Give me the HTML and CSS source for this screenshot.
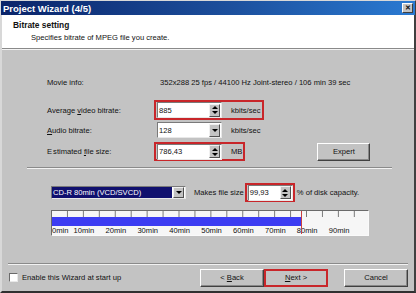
FILE: index.html
```html
<!DOCTYPE html>
<html lang="en">
<head>
    <meta charset="UTF-8">
    <title>Project Wizard (4/5)</title>
    <link rel="stylesheet" href="styles.css">
</head>
<body>
    <div class="window">
        <div class="titlebar">
            <span class="title">Project Wizard (4/5)</span>
            <span class="close">&#x2715;</span>
        </div>

        <div class="header">
            <div class="heading">Bitrate setting</div>
            <div class="subheading">Specifies bitrate of MPEG file you create.</div>
        </div>

        <div class="page">
            <div class="settings">
                <div class="row movie">
                    <span class="label">Movie info:</span>
                    <span class="info">352x288 25 fps / 44100 Hz Joint-stereo / 106 min 39 sec</span>
                </div>
                <div class="row">
                    <span class="label">Average <u>v</u>ideo bitrate:</span>
                    <span class="mark">
                        <span class="field"><span class="value">885</span><span class="spin"><i class="up"></i><i class="down"></i></span></span>
                        <span class="unit">kbits/sec</span>
                    </span>
                </div>
                <div class="row">
                    <span class="label"><u>A</u>udio bitrate:</span>
                    <span class="plain">
                        <span class="field"><span class="value">128</span><span class="drop"><i class="down"></i></span></span>
                        <span class="unit">kbits/sec</span>
                    </span>
                </div>
                <div class="row estimate">
                    <span class="label">E<span class="sp"></span>stimated <u>f</u>ile size:</span>
                    <span class="mark">
                        <span class="field"><span class="value">786,43</span><span class="spin"><i class="up"></i><i class="down"></i></span></span>
                        <span class="unit">MB</span>
                    </span>
                    <button class="expert">Expert</button>
                </div>
            </div>

            <div class="rule"></div>

            <div class="disk">
                <span class="combo"><span class="selected">CD-R 80min (VCD/SVCD)</span><span class="drop"><i class="down"></i></span></span>
                <span class="makes">Makes file size</span>
                <span class="mark small">
                    <span class="field pct"><span class="value">99,93</span><span class="spin"><i class="up"></i><i class="down"></i></span></span>
                </span>
                <span>% of disk capacity.</span>
            </div>

            <div class="meter">
                <div class="ticks"></div>
                <div class="track"><div class="fill" style="width: 249px"></div><div class="limit"></div></div>
                <div class="scale">
                    <span>0min</span><span>10min</span><span>20min</span><span>30min</span><span>40min</span>
                    <span>50min</span><span>60min</span><span>70min</span><span>80min</span><span>90min</span>
                </div>
            </div>
        </div>

        <div class="footer">
            <label class="check"><span class="box"></span>Enable this Wizard at start up</label>
            <div class="buttons">
                <button class="nav">&lt; <u>B</u>ack</button>
                <button class="nav next"><u>N</u>ext &gt;</button>
                <button class="nav cancel">Cancel</button>
            </div>
        </div>
    </div>
</body>
</html>
```

FILE: styles.css
```css
* {
    margin: 0;
    padding: 0;
    box-sizing: border-box;
}

body {
    font-family: 'Liberation Sans', Arial, sans-serif;
    font-size: 7.6px;
    color: #111;
    background: #404040;
    width: 416px;
    height: 293px;
    overflow: hidden;
}

.window {
    width: 416px;
    height: 293px;
    background: #c3c3c3;
    border: 2px solid #d8d8d8;
    border-right-color: #404040;
    border-bottom-color: #303030;
    display: flex;
    flex-direction: column;
}

.titlebar {
    height: 14px;
    margin: -1px -1px 0;
    background: linear-gradient(90deg, #0a246a 0%, #1c4f9c 55%, #2a7ad2 100%);
    display: flex;
    align-items: center;
    justify-content: space-between;
    padding: 0 2px 0 2px;
}

.title {
    color: #fff;
    font-weight: bold;
    font-size: 9.5px;
}

.close {
    width: 11px;
    height: 10px;
    background: #c3c3c3;
    border: 1px solid #fff;
    border-right-color: #404040;
    border-bottom-color: #404040;
    font-size: 7px;
    font-weight: bold;
    line-height: 8px;
    text-align: center;
}

.header {
    height: 34px;
    background: #fff;
    border-bottom: 1px solid #8a8a8a;
    box-shadow: 0 1px 0 #f4f4f4;
    padding: 4px 0 0 11px;
}

.heading {
    font-weight: bold;
    font-size: 8.4px;
    line-height: 12px;
}

.subheading {
    padding: 1px 0 0 18px;
    line-height: 12px;
}

.page {
    flex: 1;
    padding: 0 0 0 45px;
}

.settings {
    display: flex;
    flex-direction: column;
    padding-top: 27px;
}

.row {
    display: flex;
    align-items: center;
    height: 20px;
}

.row.movie {
    height: 12px;
    margin-bottom: 12px;
}

.info {
    padding-left: 3px;
}

.row.estimate {
    margin-top: 2px;
    height: 19px;
}

.label {
    width: 110px;
}

.sp {
    display: inline-block;
    width: 1px;
}

.mark,
.plain {
    display: flex;
    align-items: center;
    height: 20px;
    padding: 0 0 0 1px;
    border: 2px solid transparent;
    margin-left: -3px;
}

.estimate .mark {
    height: 19px;
}

.mark {
    border-color: #c8262a;
}

.field {
    display: flex;
    align-items: center;
    width: 65px;
    height: 16px;
    background: #fff;
    border: 1px solid #7a7a7a;
    border-right-color: #e8e8e8;
    border-bottom-color: #e8e8e8;
    padding-left: 1px;
}

.field.pct {
    width: 45px;
}

.value {
    flex: 1;
}

.spin,
.drop {
    width: 11px;
    height: 13px;
    margin-right: 1px;
    background: #c3c3c3;
    border: 1px solid #f0f0f0;
    border-right-color: #505050;
    border-bottom-color: #505050;
    display: flex;
    flex-direction: column;
    align-items: center;
    justify-content: center;
    gap: 2px;
}

.up,
.down {
    display: block;
    width: 0;
    height: 0;
    border-left: 3px solid transparent;
    border-right: 3px solid transparent;
}

.up {
    border-bottom: 3px solid #000;
}

.down {
    border-top: 3px solid #000;
}

.unit {
    padding: 0 1px 0 9px;
}

.expert {
    margin-left: 72px;
    width: 53px;
    height: 18px;
    font: inherit;
    color: #111;
    background: #c3c3c3;
    border: 1px solid #fff;
    border-right-color: #404040;
    border-bottom-color: #404040;
    box-shadow: inset -1px -1px 0 #888;
}

.rule {
    margin: 6px 22px 0 -20px;
    border-top: 1px solid #8a8a8a;
    border-bottom: 1px solid #f2f2f2;
}

.disk {
    display: flex;
    align-items: center;
    margin-top: 14px;
    height: 19px;
}

.combo {
    display: flex;
    align-items: center;
    width: 135px;
    height: 13px;
    margin-left: 4px;
    background: #fff;
    border: 1px solid #7a7a7a;
    border-right-color: #e8e8e8;
    border-bottom-color: #e8e8e8;
}

.selected {
    flex: 1;
    height: 11px;
    line-height: 11px;
    background: #10106e;
    color: #fff;
    padding-left: 1px;
    margin-right: 1px;
}

.combo .drop {
    height: 11px;
}

.makes {
    margin: 0 1px 0 8px;
}

.mark.small {
    height: 19px;
    margin-left: 0;
    padding-left: 1px;
    margin-right: 2px;
}

.meter {
    margin: 8px 0 0 4px;
    width: 318px;
    height: 26px;
    background: #f6f6f6;
    border: 1px solid #6a6a6a;
    border-right-color: #fafafa;
    border-bottom-color: #fafafa;
}

.ticks {
    height: 6px;
    background: repeating-linear-gradient(90deg, transparent 0, transparent 15px, #7a7a7a 15px, #7a7a7a 16px);
    background-size: 15.95px 6px;
    background-position: 0 0;
}

.track {
    position: relative;
    height: 9px;
}

.fill {
    height: 9px;
    background: #3c3cf2;
}

.limit {
    position: absolute;
    left: 249px;
    top: -6px;
    width: 1px;
    height: 23px;
    background: #c84040;
}

.scale {
    display: flex;
    line-height: 9px;
    white-space: nowrap;
}

.scale span {
    flex: none;
    width: 31.9px;
    text-align: center;
}

.scale span:first-child {
    width: 16px;
    text-align: left;
}

.footer {
    margin: 0 6px 3px 6px;
    border-top: 1px solid #8a8a8a;
    box-shadow: inset 0 1px 0 #f2f2f2;
    display: flex;
    align-items: center;
    justify-content: space-between;
    height: 25px;
    padding: 3px 0 0 1px;
}

.check {
    display: flex;
    align-items: center;
    gap: 4px;
}

.box {
    width: 9px;
    height: 9px;
    background: #fff;
    border: 1px solid #6a6a6a;
    border-right-color: #e8e8e8;
    border-bottom-color: #e8e8e8;
}

.buttons {
    display: flex;
}

.nav {
    width: 64px;
    height: 18px;
    font: inherit;
    color: #111;
    background: #c3c3c3;
    border: 1px solid #fff;
    border-right-color: #404040;
    border-bottom-color: #404040;
    box-shadow: inset -1px -1px 0 #888;
}

.nav.next {
    border: 2px solid #c8262a;
    box-shadow: none;
}

.nav.cancel {
    margin-left: 16px;
}
```
